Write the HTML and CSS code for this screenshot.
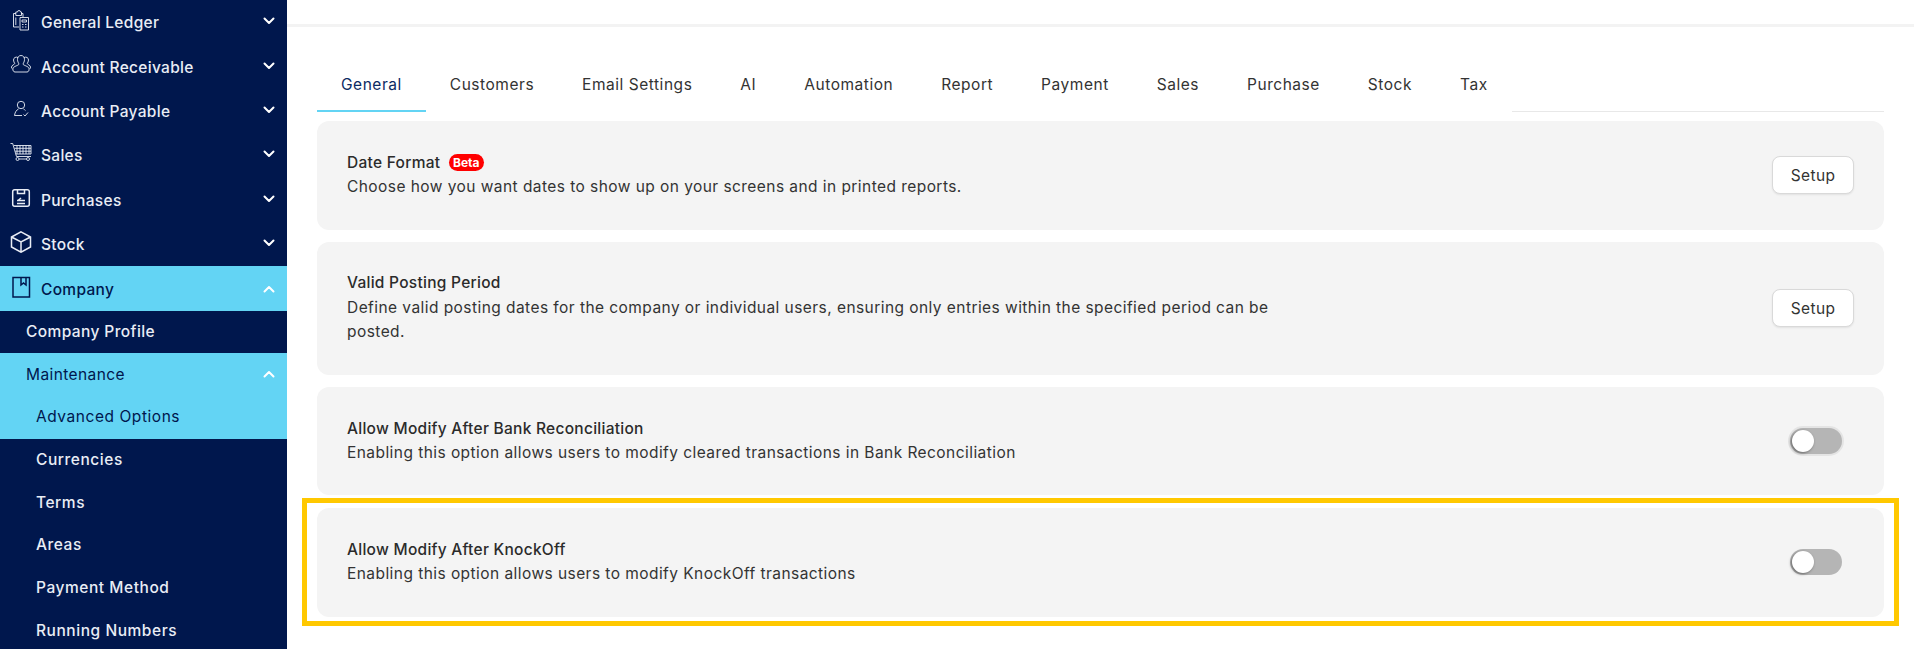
FILE: index.html
```html
<!DOCTYPE html>
<html lang="en">
<head>
<meta charset="utf-8">
<title>Advanced Options</title>
<link rel="stylesheet" href="styles.css">
</head>
<body>
<div class="app">
  <nav class="sidebar">
    <a class="nav-item">
      <svg class="icon" viewBox="0 0 22 22"><path d="M9 18H3.500V4.500H6M11 4.500h2V8"/><path d="M5.800 6.500V3h1.700a1.500 1.500 0 0 1 3 0h1v3.500zM5.800 8.500v7.500"/><path d="M10 8.500h8.500V21H10zM12 11h4.500v2H12zM12 15.500h1.500M15 15.500h1.500M12 18h1.500M15 18h1.500"/></svg>
      <span class="label">General Ledger</span><svg class="chev" viewBox="0 0 12 8"><path d="M1.500 1.500 6 6l4.500-4.500"/></svg>
    </a>
    <a class="nav-item">
      <svg class="icon" viewBox="-1 -1 22 22"><path d="M10 .5c2.500 0 3.500 2 3.500 4 0 2-1 3.500-1.500 4.500 0 1.500 5.500 2 6 4.500.4 2-.5 3.500-2 3.500H4c-1.500 0-2.400-1.500-2-3.500.5-2.500 6-3 6-4.500C7.500 8 6.500 6.500 6.500 4.500 6.500 2.500 7.500.5 10 .5z"/><path d="M13 2.500c2-1 4.500 0 4.500 2.500 0 1.500-.8 2.500-1.200 3.500 0 1 3 1.500 3.200 3.500 0 1-.3 1.700-1 2M7 2.500C5 1.500 2.500 2.500 2.500 5c0 1.500.8 2.500 1.200 3.500 0 1-3 1.500-3.200 3.500 0 1 .3 1.700 1 2"/></svg>
      <span class="label">Account Receivable</span><svg class="chev" viewBox="0 0 12 8"><path d="M1.500 1.500 6 6l4.500-4.500"/></svg>
    </a>
    <a class="nav-item">
      <svg class="icon" viewBox="0 0 22 22"><circle cx="11" cy="7" r="3.700"/><path d="M8.500 11c-2 1-3.500 3-4 6.500H12M13.500 11c.8.4 1.400.9 2 1.600M13.500 16.500l1.500 1.500 3-3.500"/></svg>
      <span class="label">Account Payable</span><svg class="chev" viewBox="0 0 12 8"><path d="M1.500 1.500 6 6l4.500-4.500"/></svg>
    </a>
    <a class="nav-item">
      <svg class="icon" viewBox="0 0 22 22"><path d="M.5 1.500h2.200L6.500 14.500H21M4 3.500h17V12H5.800M7 3.500V12M10 3.500V12M13 3.500V12M16 3.500V12M19 3.500V12M4.500 6.300H21M5.200 9.200H21"/><circle cx="7.500" cy="17" r="1.500"/><circle cx="18" cy="17" r="1.500"/><path d="M9 17h7.500"/></svg>
      <span class="label">Sales</span><svg class="chev" viewBox="0 0 12 8"><path d="M1.500 1.500 6 6l4.500-4.500"/></svg>
    </a>
    <a class="nav-item">
      <svg class="icon thick" viewBox="0 0 22 22"><rect x="2.700" y="2.700" width="16.600" height="16.600" rx="2"/><path d="M7.500 3v3.500h7V3M7 13.500h8M7 16.500h8M8 13.500l3-2.500"/></svg>
      <span class="label">Purchases</span><svg class="chev" viewBox="0 0 12 8"><path d="M1.500 1.500 6 6l4.500-4.500"/></svg>
    </a>
    <a class="nav-item">
      <svg class="icon thick" viewBox="0 0 22 22"><path d="M11 .8 20.500 6v10L11 21.200 1.500 16V6zM1.500 6 11 11l9.500-5M11 11v10"/></svg>
      <span class="label">Stock</span><svg class="chev" viewBox="0 0 12 8"><path d="M1.500 1.500 6 6l4.500-4.500"/></svg>
    </a>
    <a class="nav-item active">
      <svg class="icon thick" viewBox="0 0 22 22"><path d="M3 1.500h16.500V21H3zM11 1.500V9l2.500-2 2.500 2V1.500"/></svg>
      <span class="label">Company</span><svg class="chev light" viewBox="0 0 12 8"><path d="M1.500 6.500 6 2l4.500 4.500"/></svg>
    </a>
    <a class="sub-item">Company Profile</a>
    <div class="active-group">
      <a class="sub-item active-text">Maintenance<svg class="chev light" viewBox="0 0 12 8"><path d="M1.500 6.500 6 2l4.500 4.500"/></svg></a>
      <a class="sub-item deep active-text">Advanced Options</a>
    </div>
    <a class="sub-item deep">Currencies</a>
    <a class="sub-item deep">Terms</a>
    <a class="sub-item deep">Areas</a>
    <a class="sub-item deep">Payment Method</a>
    <a class="sub-item deep">Running Numbers</a>
  </nav>
  <main class="main">
    <div class="topbar"></div>
    <div class="content">
      <div class="tabs">
        <a class="tab selected">General</a>
        <a class="tab">Customers</a>
        <a class="tab">Email Settings</a>
        <a class="tab">AI</a>
        <a class="tab">Automation</a>
        <a class="tab">Report</a>
        <a class="tab">Payment</a>
        <a class="tab">Sales</a>
        <a class="tab">Purchase</a>
        <a class="tab">Stock</a>
        <a class="tab">Tax</a>
        <div class="tab-rest"></div>
      </div>
      <section class="card">
        <div class="card-text">
          <div class="card-title">Date Format <span class="beta">Beta</span></div>
          <div class="card-desc">Choose how you want dates to show up on your screens and in printed reports.</div>
        </div>
        <button class="setup">Setup</button>
      </section>
      <section class="card tall">
        <div class="card-text">
          <div class="card-title">Valid Posting Period</div>
          <div class="card-desc">Define valid posting dates for the company or individual users, ensuring only entries within the specified period can be posted.</div>
        </div>
        <button class="setup">Setup</button>
      </section>
      <section class="card">
        <div class="card-text">
          <div class="card-title">Allow Modify After Bank Reconciliation</div>
          <div class="card-desc">Enabling this option allows users to modify cleared transactions in Bank Reconciliation</div>
        </div>
        <div class="toggle ring"><span class="knob"></span></div>
      </section>
      <div class="highlight">
        <section class="card">
          <div class="card-text">
            <div class="card-title">Allow Modify After KnockOff</div>
            <div class="card-desc">Enabling this option allows users to modify KnockOff transactions</div>
          </div>
          <div class="toggle"><span class="knob"></span></div>
        </section>
      </div>
    </div>
  </main>
</div>
</body>
</html>
```
FILE: styles.css
```css
* { box-sizing: border-box; }
html, body { margin: 0; height: 100%; overflow: hidden; background: #fff; }
body { font-family: Inter, "Liberation Sans", sans-serif; }
.app { display: flex; height: 649px; overflow: hidden; }

.sidebar { width: 287px; flex: none; background: #00174d; color: #e9edf5; overflow: hidden; }
.nav-item { display: flex; align-items: center; height: 44.4px; padding: 1px 12px 0 10px; font-size: 15.5px; font-weight: 500; letter-spacing: .3px; }
.nav-item .icon { width: 22px; height: 22px; flex: none; margin: -5px 9px 0 0; fill: none; stroke: #e9edf5; stroke-width: .9; }
.nav-item .icon.thick { stroke-width: 1.5; }
.label { flex: 1; }
.chev { width: 12px; height: 8px; margin-top: -3px; fill: none; stroke: #fff; stroke-width: 2; stroke-linecap: round; stroke-linejoin: round; }
.chev.light { margin-top: 0; }
.active { background: #63d4f4; color: #00174d; }
.active .icon { stroke: #00174d; }
.sub-item { display: flex; align-items: center; justify-content: space-between; height: 42.67px; padding: 0 12px 1px 26px; font-size: 15.5px; font-weight: 500; letter-spacing: .4px; }
.sub-item.deep { padding-left: 36px; letter-spacing: .55px; }
.active-group { background: #63d4f4; }
.active-text { color: #00174d; font-weight: 400; }

.main { flex: 1; min-width: 0; }
.topbar { height: 27px; border-bottom: 3px solid #f3f3f3; }
.content { padding: 36px 30px 0; display: flex; flex-direction: column; gap: 12px; }

.tabs { display: flex; height: 49px; margin-bottom: -3px; }
.tab { display: flex; align-items: center; padding: 0 24px 4px; height: 49px; font-size: 15.5px; letter-spacing: .53px; color: #333; border-bottom: 2px solid transparent; }
.tab.selected { color: #0c2a63; border-bottom-color: #63d4f4; }
.tab-rest { flex: 1; border-bottom: 1px solid #e8e8e8; height: 49px; }

.card { display: flex; align-items: center; justify-content: space-between; min-height: 108.7px; padding: 0 30px; background: #f4f4f4; border-radius: 12px; }
.card.tall { min-height: 133px; }
.card-text { max-width: 940px; }
.card-title { font-size: 15.5px; font-weight: 500; letter-spacing: .27px; color: #2b2b2b; line-height: 24.5px; }
.card-desc { font-size: 15.5px; letter-spacing: .44px; color: #333; line-height: 24.5px; }
.beta { display: inline-block; width: 35px; text-align: center; background: #f00; color: #fff; font-size: 12px; font-weight: 700; letter-spacing: 0; line-height: 17px; border-radius: 8.5px; margin-left: 4px; vertical-align: 1px; }

.setup { width: 82px; height: 38px; background: #fff; border: 1px solid #d9d9d9; border-radius: 8px; font: 400 15.5px Inter, "Liberation Sans", sans-serif; letter-spacing: .4px; color: #333; box-shadow: 0 1px 2px rgba(0,0,0,.08); padding: 0; }

.toggle { position: relative; width: 52px; height: 26px; margin-right: 12px; background: #b5b5b5; border-radius: 13px; }
.toggle.ring { box-shadow: 0 0 0 2px #e4e4e4; }
.knob { position: absolute; left: 2px; top: 2px; width: 22px; height: 22px; border-radius: 50%; background: #fff; box-shadow: -1px 1px 3px rgba(0,0,0,.45); }

.highlight { margin: -9.4px -15px 0; padding: 5px 10px 4px; border: 5px solid #ffc800; }
```
